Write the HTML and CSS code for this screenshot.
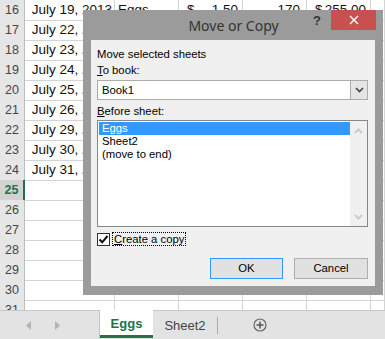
FILE: index.html
```html
<!DOCTYPE html>
<html>
<head>
	<title>Move or Copy</title>
	<meta charset="utf-8">
	<link rel="stylesheet" href="styles.css">
</head>
<body>
	<div class="app">
		<div class="sheet">
			<div class="row"><div class="hd">16</div><div class="c date">July 19, 2013</div><div class="c">Eggs</div><div class="c acct"><span>$</span><span>1.50</span></div><div class="c num">170</div><div class="c acct"><span>$</span><span>255.00</span></div><div class="c"></div></div>
			<div class="row"><div class="hd">17</div><div class="c date">July 22, 2013</div><div class="c"></div><div class="c"></div><div class="c"></div><div class="c"></div><div class="c"></div></div>
			<div class="row"><div class="hd">18</div><div class="c date">July 23, 2013</div><div class="c"></div><div class="c"></div><div class="c"></div><div class="c"></div><div class="c"></div></div>
			<div class="row"><div class="hd">19</div><div class="c date">July 24, 2013</div><div class="c"></div><div class="c"></div><div class="c"></div><div class="c"></div><div class="c"></div></div>
			<div class="row"><div class="hd">20</div><div class="c date">July 25, 2013</div><div class="c"></div><div class="c"></div><div class="c"></div><div class="c"></div><div class="c"></div></div>
			<div class="row"><div class="hd">21</div><div class="c date">July 26, 2013</div><div class="c"></div><div class="c"></div><div class="c"></div><div class="c"></div><div class="c"></div></div>
			<div class="row"><div class="hd">22</div><div class="c date">July 29, 2013</div><div class="c"></div><div class="c"></div><div class="c"></div><div class="c"></div><div class="c"></div></div>
			<div class="row"><div class="hd">23</div><div class="c date">July 30, 2013</div><div class="c"></div><div class="c"></div><div class="c"></div><div class="c"></div><div class="c"></div></div>
			<div class="row"><div class="hd">24</div><div class="c date">July 31, 2013</div><div class="c"></div><div class="c"></div><div class="c"></div><div class="c"></div><div class="c"></div></div>
			<div class="row"><div class="hd sel">25</div><div class="c"></div><div class="c"></div><div class="c"></div><div class="c"></div><div class="c"></div><div class="c"></div></div>
			<div class="row"><div class="hd">26</div><div class="c"></div><div class="c"></div><div class="c"></div><div class="c"></div><div class="c"></div><div class="c"></div></div>
			<div class="row"><div class="hd">27</div><div class="c"></div><div class="c"></div><div class="c"></div><div class="c"></div><div class="c"></div><div class="c"></div></div>
			<div class="row"><div class="hd">28</div><div class="c"></div><div class="c"></div><div class="c"></div><div class="c"></div><div class="c"></div><div class="c"></div></div>
			<div class="row"><div class="hd">29</div><div class="c"></div><div class="c"></div><div class="c"></div><div class="c"></div><div class="c"></div><div class="c"></div></div>
			<div class="row"><div class="hd">30</div><div class="c"></div><div class="c"></div><div class="c"></div><div class="c"></div><div class="c"></div><div class="c"></div></div>
			<div class="row"><div class="hd">31</div><div class="c"></div><div class="c"></div><div class="c"></div><div class="c"></div><div class="c"></div><div class="c"></div></div>
		</div>
		<div class="tabs">
			<div class="nav">
				<svg width="6" height="9" viewBox="0 0 6 9"><polygon points="5,0 5,9 0,4.5" fill="#b4b4b4"/></svg>
				<svg width="6" height="9" viewBox="0 0 6 9"><polygon points="1,0 1,9 6,4.5" fill="#b4b4b4"/></svg>
			</div>
			<div class="tab on">Eggs</div>
			<div class="tab">Sheet2</div>
			<div class="sep"></div>
			<div class="add">
				<svg width="14" height="14" viewBox="0 0 14 14"><circle cx="7" cy="7" r="6" fill="none" stroke="#666" stroke-width="1.2"/><path d="M7 3.5v7M3.5 7h7" stroke="#555" stroke-width="1.5"/></svg>
			</div>
		</div>

		<!-- dialog over the sheet -->
		<div class="dialog">
			<div class="titlebar">
				<div class="tb-side"></div>
				<div class="tb-title">Move or Copy</div>
				<div class="tb-side tb-right">
					<span class="help">?</span>
					<span class="close">
						<svg width="10" height="10" viewBox="0 0 10 10"><path d="M1 1l8 8M9 1l-8 8" stroke="#fff" stroke-width="1.4"/></svg>
					</span>
				</div>
			</div>
			<div class="panel">
				<div class="lbl">Move selected sheets</div>
				<div class="lbl"><span class="ul">T</span>o book:</div>
				<div class="combo">
					<div class="combo-text">Book1</div>
					<div class="combo-btn">
						<svg width="9" height="6" viewBox="0 0 9 6"><path d="M1 1l3.5 3.5L8 1" fill="none" stroke="#444" stroke-width="1.6"/></svg>
					</div>
				</div>
				<div class="lbl lbl-gap"><span class="ul">B</span>efore sheet:</div>
				<div class="list">
					<ul class="items">
						<li class="on">Eggs</li>
						<li>Sheet2</li>
						<li>(move to end)</li>
					</ul>
					<div class="scroll">
						<svg width="9" height="6" viewBox="0 0 9 6"><path d="M1 5l3.5-3.5L8 5" fill="none" stroke="#c2c2c2" stroke-width="1.6"/></svg>
						<svg width="9" height="6" viewBox="0 0 9 6"><path d="M1 1l3.5 3.5L8 1" fill="none" stroke="#c2c2c2" stroke-width="1.6"/></svg>
					</div>
				</div>
				<div class="check-row">
					<div class="checkbox">
						<svg width="11" height="11" viewBox="0 0 11 11"><path d="M1.5 5.5l2.7 2.8L9.5 2" fill="none" stroke="#111" stroke-width="2"/></svg>
					</div>
					<div class="check-label"><span class="ul">C</span>reate a copy</div>
				</div>
				<div class="buttons">
					<div class="btn btn-default">OK</div>
					<div class="btn">Cancel</div>
				</div>
			</div>
		</div>
	</div>
</body>
</html>
```

FILE: styles.css
```css
*{margin: 0;padding: 0;box-sizing: border-box;}
html,body{width: 100%;height: 100%;overflow: hidden;background: #fff;}
ul li{list-style: none;}
.app{position: relative;width: 385px;height: 339px;overflow: hidden;font-family: "Liberation Sans", Arial, sans-serif;}

/* spreadsheet */
.sheet{height: 310px;overflow: hidden;}
.row{display: grid;grid-template-columns: 25px 90px 64px 64px 64px 64px 1fr;height: 20px;}
.hd{background: #e6e6e6;border-right: 1px solid #bcbcbc;border-bottom: 1px solid #cfcfcf;font-size: 12.5px;color: #444;text-align: center;line-height: 20px;}
.hd.sel{background: #d2d2d2;color: #217346;font-weight: bold;border-right: 2px solid #217346;}
.c{border-right: 1px solid #d4d4d4;border-bottom: 1px solid #d4d4d4;font-size: 13.5px;line-height: 20px;color: #111;white-space: nowrap;padding: 0 3px;}
.c.date{text-align: right;overflow: visible;padding-right: 2px;}
.c.num{text-align: right;padding-right: 6px;}
.c.acct{display: flex;justify-content: space-between;padding: 0 4px 0 8px;}

/* sheet tabs */
.tabs{height: 29px;background: #e3e3e3;border-top: 1px solid #c8c8c8;display: flex;font-size: 13px;}
.nav{width: 100px;border-right: 1px solid #c2c2c2;display: flex;align-items: center;gap: 22px;padding-left: 26px;}
.tab{height: 100%;display: flex;align-items: center;justify-content: center;color: #444;}
.tab.on{width: 53px;background: #fff;color: #217346;font-weight: bold;border-bottom: 3px solid #217346;padding-top: 2px;margin-top: -1px;}
.tab:not(.on){width: 64px;}
.sep{width: 1px;height: 17px;background: #a8a8a8;align-self: center;}
.add{display: flex;align-items: center;margin-left: 35px;}

/* dialog */
.dialog{position: absolute;left: 83px;top: 10px;width: 300px;background: #9b9b9b;padding: 0 8px 9px 8px;font-family: "Liberation Sans", Arial, sans-serif;color: #000;}
.titlebar{height: 30px;display: flex;margin-right: -1px;}
.tb-side{flex: 1 1 0;}
.tb-title{font-family: "Noto Sans", "Open Sans", sans-serif;font-size: 14px;color: #333;line-height: 30px;padding-top: 1px;white-space: nowrap;}
.tb-right{display: flex;justify-content: flex-end;align-items: flex-start;}
.help{font-size: 13px;font-weight: bold;color: #333;line-height: 22px;margin-right: 10px;}
.close{width: 45px;height: 20px;background: #c75050;display: flex;align-items: center;justify-content: center;}
.panel{background: #f0f0f0;height: 246px;padding: 6px 7px 0 6px;font-size: 11.3px;}
.ul{text-decoration: underline;}
.lbl{height: 16px;line-height: 16px;}
.lbl-gap{margin-top: 3px;margin-bottom: 1px;}
.combo{margin-top: 2px;height: 20px;border: 1px solid #acacac;background: #fff;display: flex;}
.combo-text{flex: 1;line-height: 18px;padding-left: 4px;}
.combo-btn{width: 17px;background: #e5e5e5;border-left: 1px solid #acacac;display: flex;align-items: center;justify-content: center;}
.list{height: 107px;border: 1px solid #828790;background: #fff;display: flex;padding: 1px 0 1px 1px;}
.items{flex: 1;}
.items li{height: 13px;line-height: 13px;padding-left: 3px;}
.items li.on{background: #3399ff;color: #fff;}
.scroll{width: 17px;background: #f0f0f0;display: flex;flex-direction: column;justify-content: space-between;align-items: center;padding: 7px 0 6px;margin-top: -1px;margin-bottom: -1px;}
.check-row{margin-top: 5px;height: 14px;display: flex;align-items: center;}
.checkbox{width: 13px;height: 13px;border: 1px solid #333;background: #fff;display: flex;align-items: center;justify-content: center;}
.check-label{margin-left: 2px;height: 14px;line-height: 12px;border: 1px dotted #000;padding: 0 1px;}
.buttons{margin-top: 12px;display: flex;justify-content: flex-end;gap: 11px;}
.btn{width: 74px;height: 21px;border: 1px solid #adadad;background: #e1e1e1;text-align: center;line-height: 19px;}
.btn-default{width: 73px;border-color: #3399ff;}
```
